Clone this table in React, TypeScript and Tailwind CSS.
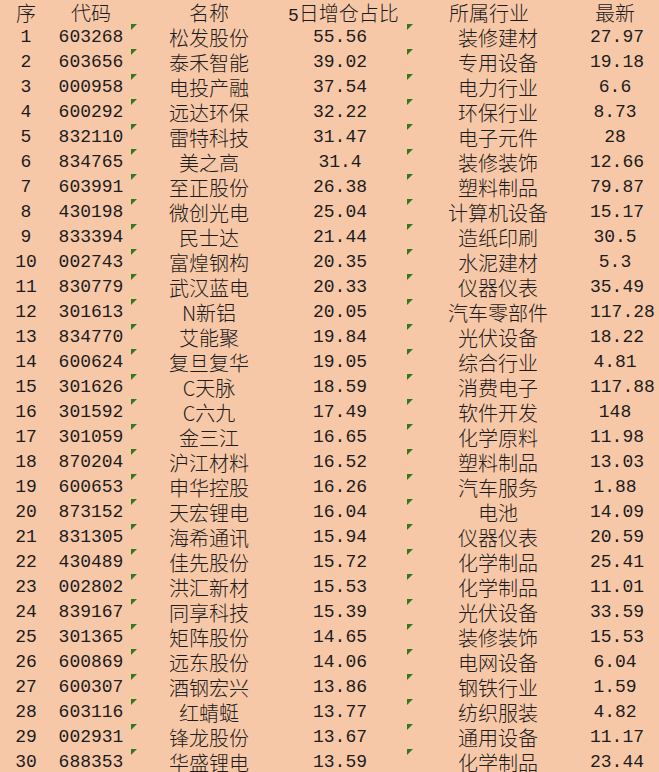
const rows: [string, string, string, string, string][] = [
  ["603268", "松发股份", "55.56", "装修建材", "27.97"],
  ["603656", "泰禾智能", "39.02", "专用设备", "19.18"],
  ["000958", "电投产融", "37.54", "电力行业", "6.6"],
  ["600292", "远达环保", "32.22", "环保行业", "8.73"],
  ["832110", "雷特科技", "31.47", "电子元件", "28"],
  ["834765", "美之高", "31.4", "装修装饰", "12.66"],
  ["603991", "至正股份", "26.38", "塑料制品", "79.87"],
  ["430198", "微创光电", "25.04", "计算机设备", "15.17"],
  ["833394", "民士达", "21.44", "造纸印刷", "30.5"],
  ["002743", "富煌钢构", "20.35", "水泥建材", "5.3"],
  ["830779", "武汉蓝电", "20.33", "仪器仪表", "35.49"],
  ["301613", "N新铝", "20.05", "汽车零部件", "117.28"],
  ["834770", "艾能聚", "19.84", "光伏设备", "18.22"],
  ["600624", "复旦复华", "19.05", "综合行业", "4.81"],
  ["301626", "C天脉", "18.59", "消费电子", "117.88"],
  ["301592", "C六九", "17.49", "软件开发", "148"],
  ["301059", "金三江", "16.65", "化学原料", "11.98"],
  ["870204", "沪江材料", "16.52", "塑料制品", "13.03"],
  ["600653", "申华控股", "16.26", "汽车服务", "1.88"],
  ["873152", "天宏锂电", "16.04", "电池", "14.09"],
  ["831305", "海希通讯", "15.94", "仪器仪表", "20.59"],
  ["430489", "佳先股份", "15.72", "化学制品", "25.41"],
  ["002802", "洪汇新材", "15.53", "化学制品", "11.01"],
  ["839167", "同享科技", "15.39", "光伏设备", "33.59"],
  ["301365", "矩阵股份", "14.65", "装修装饰", "15.53"],
  ["600869", "远东股份", "14.06", "电网设备", "6.04"],
  ["600307", "酒钢宏兴", "13.86", "钢铁行业", "1.59"],
  ["603116", "红蜻蜓", "13.77", "纺织服装", "4.82"],
  ["002931", "锋龙股份", "13.67", "通用设备", "11.17"],
  ["688353", "华盛锂电", "13.59", "化学制品", "23.44"],
];

const cjk = "font-['Noto_Sans_CJK_SC',sans-serif] text-[20px] font-light";
const num = "font-['Liberation_Mono','Noto_Sans_CJK_SC',monospace] text-[18px]";
const grid = "grid grid-cols-[52px_78px_158px_118px_184px_50px] h-[25px] leading-[25px] text-[#1c1c1c]";

const Flag = () => (
  <svg className="absolute left-[1px] top-[-1px]" width="6" height="6" viewBox="0 0 6 6">
    <polygon points="0,0 6,0 0,6" fill="#2f7a1c" />
  </svg>
);

export default function App() {
  return (
    <div className="min-h-screen w-[659px] bg-[#f7c8a8] overflow-hidden">
      <div className={grid}>
        <div className={`${cjk} text-center`}>序</div>
        <div className={`${cjk} text-center`}>代码</div>
        <div className={`${cjk} text-center`}>名称</div>
        <div className={`${cjk} text-center pr-[12px] whitespace-nowrap`}>
          <span className={num}>5</span>日增仓占比
        </div>
        <div className={`${cjk} text-center pr-[18px]`}>所属行业</div>
        <div className={`${cjk} text-center`}>最新</div>
      </div>
      {rows.map((r, i) => (
        <div key={r[0]} className={grid}>
          <div className={`${num} text-center`}>{i + 1}</div>
          <div className={`${num} text-center`}>{r[0]}</div>
          <div className={`${cjk} text-center relative`}>
            <Flag />
            {r[1]}
          </div>
          <div className={`${num} text-center pr-[14px]`}>{r[2]}</div>
          <div className={`${cjk} text-center relative whitespace-nowrap`}>
            <Flag />
            {r[3]}
          </div>
          <div className={`${num} text-center`}>{r[4]}</div>
        </div>
      ))}
    </div>
  );
}
